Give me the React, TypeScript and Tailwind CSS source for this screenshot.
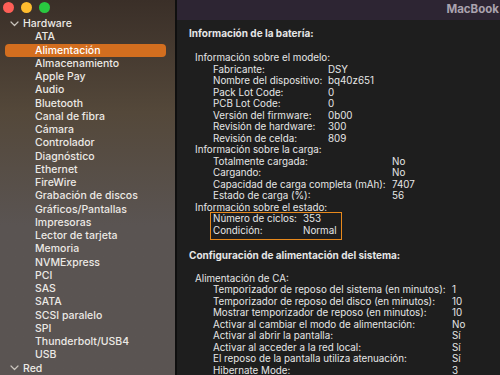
import React from "react";

const sidebarItems = [
  "ATA",
  "Alimentación",
  "Almacenamiento",
  "Apple Pay",
  "Audio",
  "Bluetooth",
  "Canal de fibra",
  "Cámara",
  "Controlador",
  "Diagnóstico",
  "Ethernet",
  "FireWire",
  "Grabación de discos",
  "Gráficos/Pantallas",
  "Impresoras",
  "Lector de tarjeta",
  "Memoria",
  "NVMExpress",
  "PCI",
  "SAS",
  "SATA",
  "SCSI paralelo",
  "SPI",
  "Thunderbolt/USB4",
  "USB",
];

function Chevron() {
  return (
    <svg width="9" height="6" viewBox="0 0 9 6" className="shrink-0">
      <path d="M1 1 L4.5 4.5 L8 1" fill="none" stroke="#c9c4bd" strokeWidth="1.2" strokeLinecap="round" strokeLinejoin="round" />
    </svg>
  );
}

function Row({ label, value, indent, col }: { label: string; value?: string; indent: number; col: number }) {
  return (
    <div className="flex h-[11.5px] items-center whitespace-nowrap" style={{ paddingLeft: indent }}>
      <span style={{ width: col - indent }} className="shrink-0">{label}</span>
      {value !== undefined && <span>{value}</span>}
    </div>
  );
}

export default function App() {
  const font = { fontFamily: "Inter, 'Noto Sans', sans-serif" };
  return (
    <div className="flex h-[375px] w-[500px] overflow-hidden bg-[#1e1e1e]" style={font}>
      {/* Sidebar */}
      <div className="flex h-full w-[175px] shrink-0 flex-col bg-gradient-to-b from-[#3a2f28] via-[#54483a] via-30% to-[#5a5452] to-60% text-[10.5px] font-medium text-[#ece9e5]">
        <div className="flex h-[19px] items-start gap-[7px] pl-[3px] pt-[2px]">
          <span className="h-[11px] w-[11px] rounded-full bg-[#fe5f57]" />
          <span className="h-[11px] w-[11px] rounded-full bg-[#febc2e]" />
          <span className="h-[11px] w-[11px] rounded-full bg-[#29c840]" />
        </div>
        <div className="flex h-[13.25px] items-center gap-[4px] pl-[10px]">
          <Chevron />
          <span>Hardware</span>
        </div>
        {sidebarItems.map((it) => (
          <div key={it} className="px-[5px]">
            <div
              className={
                "flex h-[13.25px] items-center rounded-[4px] pl-[30px] " +
                (it === "Alimentación" ? "w-[161px] bg-[#d36e1f] text-white" : "")
              }
            >
              {it}
            </div>
          </div>
        ))}
        <div className="flex h-[13.25px] items-center gap-[4px] pl-[10px]">
          <Chevron />
          <span>Red</span>
        </div>
      </div>
      {/* Divider */}
      <div className="h-full w-[2px] shrink-0 bg-[#0f0f0f]" />
      {/* Content */}
      <div className="flex min-w-0 flex-1 flex-col">
        <div className="flex h-[20px] shrink-0 items-center justify-end overflow-hidden bg-[#2d2533]">
          <span className="mr-[1px] whitespace-nowrap text-[11.5px] font-bold text-[#aaa2ae]">MacBook</span>
        </div>
        <div className="flex flex-col pl-[12px] pt-[7px] text-[9.8px] text-[#e6e6e6]">
          <div className="flex h-[13px] items-center text-[10px] font-bold">Información de la batería:</div>
          <div className="h-[13px]" />
          <Row label="Información sobre el modelo:" indent={6} col={6} />
          <Row label="Fabricante:" value="DSY" indent={24} col={139} />
          <Row label="Nombre del dispositivo:" value="bq40z651" indent={24} col={139} />
          <Row label="Pack Lot Code:" value="0" indent={24} col={139} />
          <Row label="PCB Lot Code:" value="0" indent={24} col={139} />
          <Row label="Versión del firmware:" value="0b00" indent={24} col={139} />
          <Row label="Revisión de hardware:" value="300" indent={24} col={139} />
          <Row label="Revisión de celda:" value="809" indent={24} col={139} />
          <Row label="Información sobre la carga:" indent={6} col={6} />
          <Row label="Totalmente cargada:" value="No" indent={24} col={203} />
          <Row label="Cargando:" value="No" indent={24} col={203} />
          <Row label="Capacidad de carga completa (mAh):" value="7407" indent={24} col={203} />
          <Row label="Estado de carga (%):" value="56" indent={24} col={203} />
          <Row label="Información sobre el estado:" indent={6} col={6} />
          <div className="relative">
            <Row label="Número de ciclos:" value="353" indent={24} col={114} />
            <Row label="Condición:" value="Normal" indent={24} col={114} />
            <div className="pointer-events-none absolute left-[21px] top-[-2px] h-[28px] w-[132px] border-[1.5px] border-[#e8891c]" />
          </div>
          <div className="h-[12px]" />
          <div className="flex h-[12px] items-center text-[10px] font-bold">Configuración de alimentación del sistema:</div>
          <div className="h-[12.5px]" />
          <Row label="Alimentación de CA:" indent={6} col={6} />
          <Row label="Temporizador de reposo del sistema (en minutos):" value="1" indent={24} col={263} />
          <Row label="Temporizador de reposo del disco (en minutos):" value="10" indent={24} col={263} />
          <Row label="Mostrar temporizador de reposo (en minutos):" value="10" indent={24} col={263} />
          <Row label="Activar al cambiar el modo de alimentación:" value="No" indent={24} col={263} />
          <Row label="Activar al abrir la pantalla:" value="Sí" indent={24} col={263} />
          <Row label="Activar al acceder a la red local:" value="Sí" indent={24} col={263} />
          <Row label="El reposo de la pantalla utiliza atenuación:" value="Sí" indent={24} col={263} />
          <Row label="Hibernate Mode:" value="3" indent={24} col={263} />
        </div>
      </div>
    </div>
  );
}
